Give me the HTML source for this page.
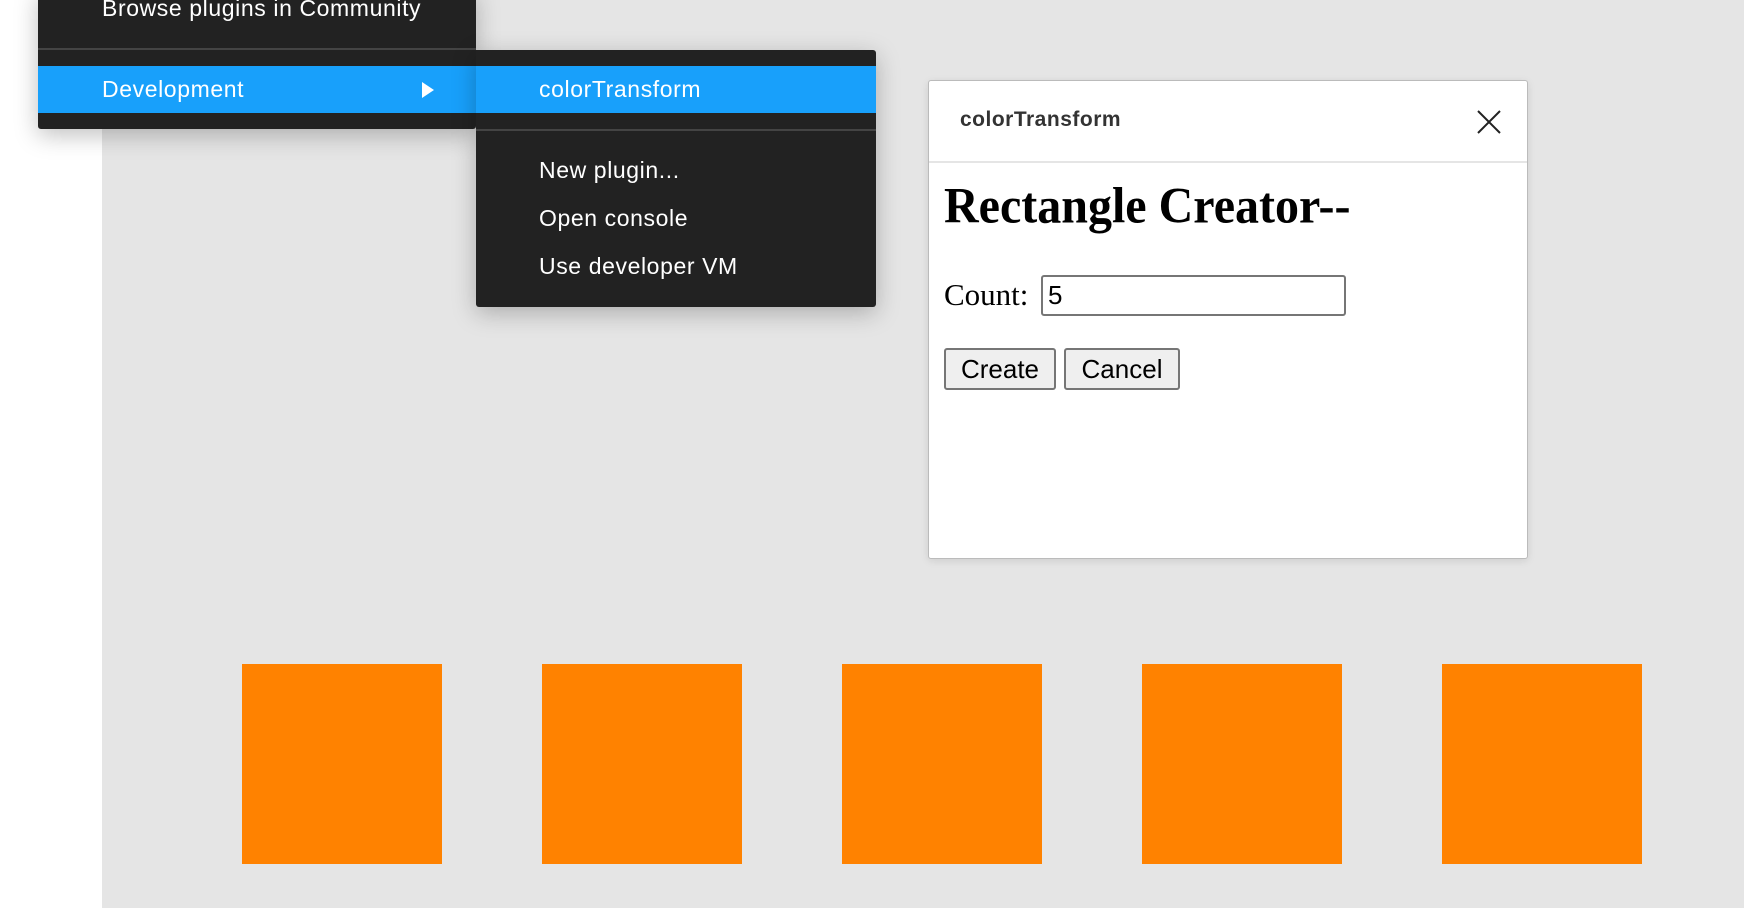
<!DOCTYPE html>
<html><head><meta charset="utf-8"><style>
*{margin:0;padding:0;box-sizing:border-box}
body{width:1744px;height:908px;background:#fff;position:relative;overflow:hidden;font-family:"Liberation Sans",sans-serif}
.canvas{position:absolute;left:102px;top:0;width:1642px;height:908px;background:#e5e5e5}
.menu{position:absolute;background:#222;border-radius:3px;box-shadow:0 6px 24px rgba(0,0,0,.25);color:#fff;font-size:23px;letter-spacing:0.6px}
.item{position:absolute;left:0;right:0;height:47px;line-height:47px}
.hl{background:#18a0fb}
.sep{position:absolute;left:0;right:0;height:2px;background:#444}
.sq{position:absolute;top:664px;width:200px;height:200px;background:#ff8200}
.dlg{position:absolute;left:928px;top:80px;width:600px;height:479px;background:#fff;border:1px solid #bbb;border-radius:3px;box-shadow:0 2px 8px rgba(0,0,0,.1)}
</style></head><body>
<div class="canvas"></div>
<div class="menu" style="left:38px;top:-10px;width:438px;height:139px;border-radius:0 0 3px 3px">
 <div class="item" style="top:-5px;padding-left:64px">Browse plugins in Community</div>
 <div class="sep" style="top:58px"></div>
 <div class="item hl" style="top:76px;padding-left:64px">Development</div>
 <svg style="position:absolute;left:384px;top:92px" width="12" height="16"><path d="M0 0L12 8L0 16Z" fill="#fff"/></svg>
</div>
<div class="menu" style="left:476px;top:50px;width:400px;height:257px;border-radius:0 3px 3px 3px">
 <div class="item hl" style="top:16px;padding-left:63px">colorTransform</div>
 <div class="sep" style="top:79px"></div>
 <div class="item" style="top:97px;padding-left:63px">New plugin...</div>
 <div class="item" style="top:145px;padding-left:63px">Open console</div>
 <div class="item" style="top:193px;padding-left:63px">Use developer VM</div>
</div>
<div class="dlg">
 <div style="position:absolute;left:31px;top:27px;font-size:21px;font-weight:bold;color:#333;letter-spacing:0.5px">colorTransform</div>
 <svg style="position:absolute;left:548px;top:29px" width="24" height="24"><path d="M1 1L23 23M23 1L1 23" stroke="#222" stroke-width="2"/></svg>
 <div style="position:absolute;left:0;right:0;top:80px;height:2px;background:#e5e5e5"></div>
 <div style="position:absolute;left:15px;top:95px;font-family:'Liberation Serif',serif;font-weight:bold;font-size:48px;line-height:58px;color:#000;transform:scaleY(1.06);transform-origin:left top">Rectangle Creator--</div>
 <div style="position:absolute;left:15px;top:196px;font-family:'Liberation Serif',serif;font-size:31px;line-height:36px">Count:</div>
 <div style="position:absolute;left:112px;top:194px;width:305px;height:41px;border:2px solid #767676;border-radius:3px;font-size:26px;line-height:37px;padding-left:5px">5</div>
 <div style="position:absolute;left:15px;top:267px;width:112px;height:42px;border:2px solid #767676;border-radius:3px;background:#efefef;font-size:26px;line-height:38px;text-align:center">Create</div>
 <div style="position:absolute;left:135px;top:267px;width:116px;height:42px;border:2px solid #767676;border-radius:3px;background:#efefef;font-size:26px;line-height:38px;text-align:center">Cancel</div>
</div>
<div class="sq" style="left:242px"></div>
<div class="sq" style="left:542px"></div>
<div class="sq" style="left:842px"></div>
<div class="sq" style="left:1142px"></div>
<div class="sq" style="left:1442px"></div>
</body></html>
